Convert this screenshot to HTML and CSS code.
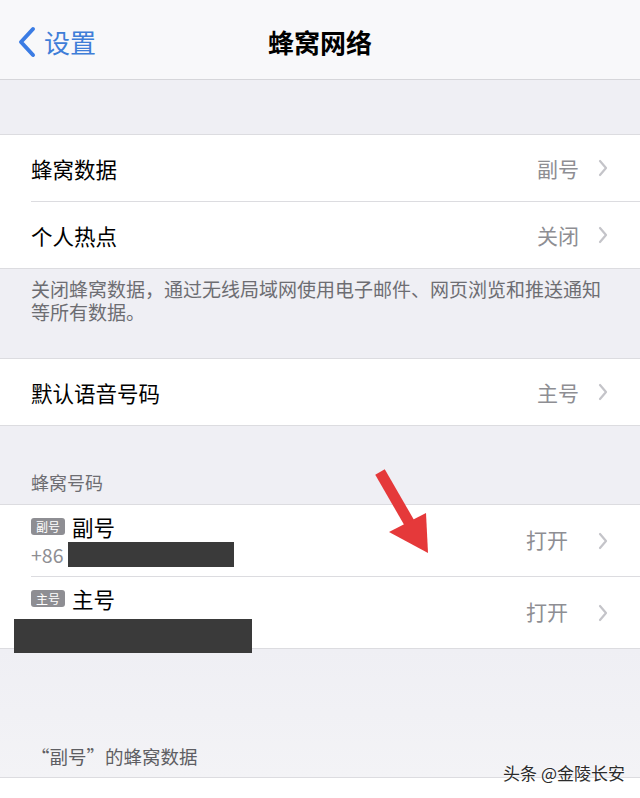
FILE: index.html
```html
<!DOCTYPE html>
<html>
<head>
  <meta charset="utf-8">
  <title>蜂窝网络</title>
  <link rel="stylesheet" href="styles.css">
</head>
<body>
  <div class="screen">
    <div class="nav">
      <div class="back">
        <svg class="back-chevron" width="18" height="32" viewBox="0 0 18 32">
          <polyline points="15,3 3,16 15,29" fill="none" stroke="#3b7ce4" stroke-width="4" stroke-linecap="round" stroke-linejoin="round"/>
        </svg>
        <span>设置</span>
      </div>
      <div class="title">蜂窝网络</div>
      <div></div>
    </div>

    <div class="group first">
      <div class="row">
        <span class="label">蜂窝数据</span>
        <span class="value">副号</span>
        <svg class="chev" width="10" height="18" viewBox="0 0 10 18"><polyline points="2,2 8,9 2,16" fill="none" stroke="#c4c4c9" stroke-width="2.2" stroke-linecap="round" stroke-linejoin="round"/></svg>
      </div>
      <div class="row">
        <span class="label">个人热点</span>
        <span class="value">关闭</span>
        <svg class="chev" width="10" height="18" viewBox="0 0 10 18"><polyline points="2,2 8,9 2,16" fill="none" stroke="#c4c4c9" stroke-width="2.2" stroke-linecap="round" stroke-linejoin="round"/></svg>
      </div>
    </div>
    <p class="note">关闭蜂窝数据，通过无线局域网使用电子邮件、网页浏览和推送通知等所有数据。</p>

    <div class="group">
      <div class="row">
        <span class="label">默认语音号码</span>
        <span class="value">主号</span>
        <svg class="chev" width="10" height="18" viewBox="0 0 10 18"><polyline points="2,2 8,9 2,16" fill="none" stroke="#c4c4c9" stroke-width="2.2" stroke-linecap="round" stroke-linejoin="round"/></svg>
      </div>
    </div>

    <div class="section-head">蜂窝号码</div>
    <div class="group">
      <div class="row tall">
        <div class="line-block">
          <div class="line-top"><span class="badge">副号</span><span class="label">副号</span></div>
          <div class="line-sub"><span>+86</span><span class="redact"></span></div>
        </div>
        <span class="value">打开</span>
        <svg class="chev" width="10" height="18" viewBox="0 0 10 18"><polyline points="2,2 8,9 2,16" fill="none" stroke="#c4c4c9" stroke-width="2.2" stroke-linecap="round" stroke-linejoin="round"/></svg>
      </div>
      <div class="row tall">
        <div class="line-block">
          <div class="line-top"><span class="badge">主号</span><span class="label">主号</span></div>
          <div class="line-sub"></div>
        </div>
        <span class="value">打开</span>
        <svg class="chev" width="10" height="18" viewBox="0 0 10 18"><polyline points="2,2 8,9 2,16" fill="none" stroke="#c4c4c9" stroke-width="2.2" stroke-linecap="round" stroke-linejoin="round"/></svg>
        <span class="redact wide"></span>
      </div>
    </div>

    <div class="bottom">
      <div class="section-head low">“副号”的蜂窝数据</div>
    </div>
    <div class="white-tail"></div>

    <!-- red pointer arrow drawn over the list -->
    <svg class="arrow" width="80" height="100" viewBox="0 0 80 100">
      <line x1="14" y1="12" x2="44" y2="64" stroke="#e5393a" stroke-width="11"/>
      <polygon points="23,72 60,53 62,93" fill="#e5393a"/>
    </svg>

    <div class="watermark">头条 @金陵长安</div>
  </div>
</body>
</html>
```

FILE: styles.css
```css
/* iOS settings page look */
body {
  margin: 0;
  font-family: "Noto Sans CJK SC", "Noto Sans", sans-serif;
  color: #000;
}

.screen {
  position: relative;
  width: 640px;
  height: 798px;
  overflow: hidden;
  background-color: #efeff4;
}

/* Nav bar */
.nav {
  height: 79px;
  display: grid;
  grid-template-columns: 1fr auto 1fr;
  align-items: center;
  background-color: #f8f8fa;
  border-bottom: 1px solid #d6d6da;
}

.back {
  display: flex;
  align-items: center;
  gap: 8px;
  padding-left: 18px;
  color: #3f7ed8;
  font-size: 26px;
  padding-top: 4px;
}

.title {
  font-size: 26px;
  font-weight: bold;
  padding-top: 4px;
}

/* Groups and rows */
.group {
  background-color: #fff;
  border-top: 1px solid #dcdce0;
  border-bottom: 1px solid #dcdce0;
}

.group.first {
  margin-top: 54px;
}

.row {
  position: relative;
  height: 66px;
  display: flex;
  align-items: center;
  padding: 0 32px 0 31px;
}

.row + .row {
  border-top: 1px solid #dcdce0;
  margin-left: 31px;
  padding-left: 0;
}

.row.tall {
  height: 71px;
}

.label {
  font-size: 21.5px;
  flex: 1;
}

.value {
  font-size: 21px;
  color: #8e8e93;
  margin-right: 19px;
}

.row.tall .value {
  margin-right: 30px;
  padding-bottom: 3px;
}

.chev {
  display: block;
}

.note {
  margin: 0;
  padding: 8px 32px 35px 31px;
  font-size: 19px;
  line-height: 23px;
  color: #6d6d72;
}

.section-head {
  padding: 43px 31px 9px;
  font-size: 18px;
  color: #6d6d72;
}

/* Phone number rows */
.line-block {
  flex: 1;
  display: flex;
  flex-direction: column;
}

.line-top {
  display: flex;
  align-items: center;
  gap: 7px;
  height: 28px;
}

.line-sub {
  display: flex;
  align-items: center;
  height: 28px;
  font-size: 19.5px;
  color: #8e8e93;
}

.badge {
  display: inline-block;
  background-color: #8e8e93;
  color: #fff;
  font-size: 12px;
  line-height: 17px;
  padding: 0 5px;
  border-radius: 3px;
}

.redact {
  display: inline-block;
  width: 166px;
  height: 25px;
  margin-left: 5px;
  background-color: #3a3a3a;
}

.redact.wide {
  position: absolute;
  left: -17px;
  top: 42px;
  width: 238px;
  height: 34px;
  margin: 0;
}

/* Lower faded area */
.bottom {
  height: 128px;
  background: linear-gradient(#efeff4, #f3f3f6);
}

.section-head.low {
  padding-top: 94px;
  padding-bottom: 0;
  font-size: 18.5px;
  color: #5e5e63;
}

.white-tail {
  border-top: 1px solid #dcdce0;
  height: 40px;
  background-color: #fff;
}

.arrow {
  position: absolute;
  left: 366px;
  top: 460px;
}

.watermark {
  position: absolute;
  right: 15px;
  top: 760px;
  font-size: 17px;
  color: #2b2b2b;
  text-shadow: 0 0 2px #fff, 0 0 2px #fff;
}
```
